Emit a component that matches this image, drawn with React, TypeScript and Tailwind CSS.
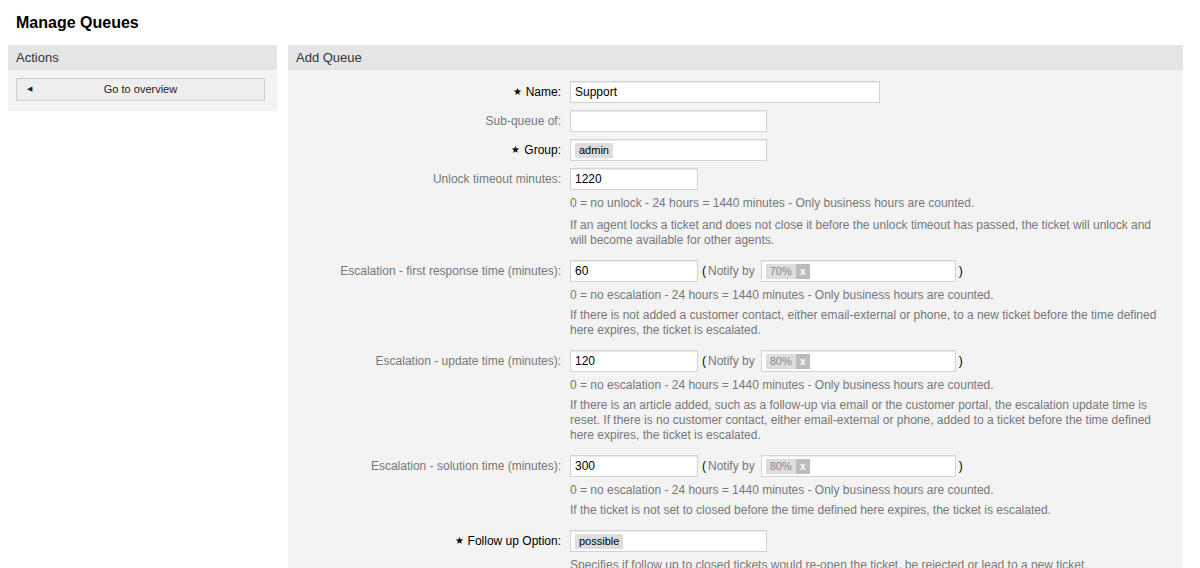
import React from 'react'

const inputCls =
  'h-[22px] border border-[#d3d3d3] bg-white px-[4px] text-[12px] leading-[20px] text-black shadow-[inset_0_1px_1px_rgba(0,0,0,0.08)]'

function Label({ text, required }: { text: string; required?: boolean }) {
  return (
    <div
      className={`flex h-[22px] w-[282px] shrink-0 items-center justify-end pr-[9px] text-[12px] leading-[22px] ${
        required ? 'text-black' : 'text-[#777]'
      }`}
    >
      {required && <span className="mr-[4px] text-[10px] leading-[22px]">★</span>}
      {text}
    </div>
  )
}

function Tag({ text, removable }: { text: string; removable?: boolean }) {
  if (removable) {
    return (
      <span className="mt-[3px] inline-flex h-[15px] items-center bg-[#ddd] pl-[4px] text-[11px] leading-[15px] text-[#888]">
        {text}
        <span className="ml-[4px] flex h-[15px] w-[14px] items-center justify-center bg-[#bbb] text-[10px] font-bold text-white">
          x
        </span>
      </span>
    )
  }
  return (
    <span className="mt-[3px] inline-block h-[15px] bg-[#ddd] px-[4px] text-[11px] leading-[15px] text-black">
      {text}
    </span>
  )
}

function Help({ children }: { children: React.ReactNode }) {
  return <p className="w-[598px] text-[12px] leading-[15px] text-[#777]">{children}</p>
}

function EscalationRow({ label, value, pct, help }: { label: string; value: string; pct: string; help: React.ReactNode }) {
  return (
    <div className="mb-[12px] flex">
      <Label text={label} />
      <div className="flex flex-col">
        <div className="flex h-[22px] items-center">
          <div className={`${inputCls} w-[128px]`}>{value}</div>
          <span className="ml-[4px] text-[12px] text-black">(</span>
          <span className="ml-[2px] text-[12px] text-[#777]">Notify by</span>
          <div className={`${inputCls} ml-[6px] w-[195px]`}>
            <Tag text={pct} removable />
          </div>
          <span className="ml-[3px] text-[12px] text-black">)</span>
        </div>
        <div className="mt-[6px] flex flex-col gap-[5px]">
          <Help>0 = no escalation - 24 hours = 1440 minutes - Only business hours are counted.</Help>
          <Help>{help}</Help>
        </div>
      </div>
    </div>
  )
}

export default function App() {
  return (
    <div className="min-h-[568px] bg-white px-[8px] pt-[14px] font-['Liberation_Sans',Arial,sans-serif]">
      <h1 className="mb-[13px] pl-[8px] text-[16px] font-bold leading-[18px] text-black">Manage Queues</h1>

      <div className="flex items-start gap-[11px]">
        <div className="w-[269px] shrink-0">
          <div className="h-[25px] bg-[#e5e5e5] pl-[8px] text-[13px] leading-[25px] text-[#333]">Actions</div>
          <div className="bg-[#f3f3f3] pb-[10px] pl-[8px] pr-[12px] pt-[8px]">
            <button className="relative flex h-[23px] w-full items-center justify-center border border-[#ccc] bg-[#eee] text-[11px] text-[#222]">
              <span className="absolute left-[10px] text-[7px]">◀</span>
              Go to overview
            </button>
          </div>
        </div>

        <div className="w-[895px] shrink-0">
          <div className="h-[25px] bg-[#e5e5e5] pl-[8px] text-[13px] leading-[25px] text-[#333]">Add Queue</div>
          <div className="h-[498px] overflow-hidden bg-[#f3f3f3] pt-[11px]">
            <div className="mb-[7px] flex">
              <Label text="Name:" required />
              <div className={`${inputCls} w-[310px]`}>Support</div>
            </div>
            <div className="mb-[7px] flex">
              <Label text="Sub-queue of:" />
              <div className={`${inputCls} w-[197px]`} />
            </div>
            <div className="mb-[7px] flex">
              <Label text="Group:" required />
              <div className={`${inputCls} w-[197px]`}>
                <Tag text="admin" />
              </div>
            </div>
            <div className="mb-[12px] flex">
              <Label text="Unlock timeout minutes:" />
              <div className="flex flex-col">
                <div className={`${inputCls} w-[128px]`}>1220</div>
                <div className="mt-[6px] flex flex-col gap-[7px]">
                  <Help>0 = no unlock - 24 hours = 1440 minutes - Only business hours are counted.</Help>
                  <Help>
                    If an agent locks a ticket and does not close it before the unlock timeout has passed, the ticket will unlock and will become available for other agents.
                  </Help>
                </div>
              </div>
            </div>

            <EscalationRow
              label="Escalation - first response time (minutes):"
              value="60"
              pct="70%"
              help="If there is not added a customer contact, either email-external or phone, to a new ticket before the time defined here expires, the ticket is escalated."
            />
            <EscalationRow
              label="Escalation - update time (minutes):"
              value="120"
              pct="80%"
              help="If there is an article added, such as a follow-up via email or the customer portal, the escalation update time is reset. If there is no customer contact, either email-external or phone, added to a ticket before the time defined here expires, the ticket is escalated."
            />
            <EscalationRow
              label="Escalation - solution time (minutes):"
              value="300"
              pct="80%"
              help="If the ticket is not set to closed before the time defined here expires, the ticket is escalated."
            />

            <div className="flex">
              <Label text="Follow up Option:" required />
              <div className="flex flex-col">
                <div className={`${inputCls} w-[197px]`}>
                  <Tag text="possible" />
                </div>
                <div className="mt-[6px]">
                  <Help>Specifies if follow up to closed tickets would re-open the ticket, be rejected or lead to a new ticket.</Help>
                </div>
              </div>
            </div>
          </div>
        </div>
      </div>
    </div>
  )
}
